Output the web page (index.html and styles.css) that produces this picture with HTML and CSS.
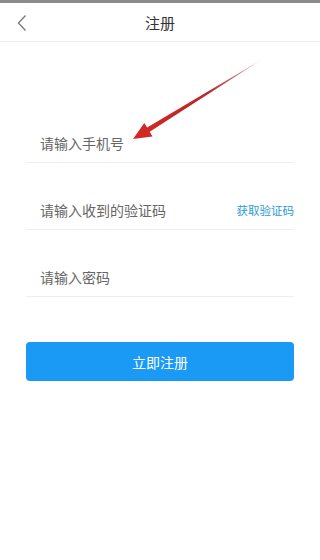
FILE: index.html
```html
<!DOCTYPE html>
<html lang="zh">
<head>
<meta charset="utf-8">
<link rel="stylesheet" href="styles.css">
</head>
<body>
<div class="statusbar"></div>
<header class="nav">
  <svg class="back" width="12" height="18" viewBox="0 0 12 18"><path d="M9.5 1.5 L2.5 9 L9.5 16.5" fill="none" stroke="#777" stroke-width="1.3"/></svg>
  <h1 class="title">注册</h1>
</header>
<form class="form">
  <div class="row"><span class="ph">请输入手机号</span></div>
  <div class="row"><span class="ph">请输入收到的验证码</span><span class="code">获取验证码</span></div>
  <div class="row"><span class="ph">请输入密码</span></div>
  <div class="btn">立即注册</div>
</form>
<svg class="arrow" width="320" height="560" viewBox="0 0 320 560">
  <defs>
    <linearGradient id="g" x1="133" y1="139" x2="261" y2="60" gradientUnits="userSpaceOnUse">
      <stop offset="0" stop-color="#d42a22"/>
      <stop offset="0.6" stop-color="#b8262a"/>
      <stop offset="1" stop-color="#e9b0b0"/>
    </linearGradient>
  </defs>
  <polygon points="133,139 144.3,122.9 147.1,127.6 261,60 149.7,131.8 152.5,136.5" fill="url(#g)"/>
</svg>
</body>
</html>
```
FILE: styles.css
```css
html, body { margin: 0; padding: 0; background: #fff; }
body {
  width: 320px; height: 560px; position: relative; overflow: hidden;
  font-family: "Noto Sans CJK SC", "Noto Sans", sans-serif;
}
.statusbar { height: 3px; background: #8c8c8c; }
.nav {
  height: 38px; display: flex; align-items: center; justify-content: center;
  position: relative; border-bottom: 1px solid #efefef;
}
.back { position: absolute; left: 16px; top: 11px; }
.title { margin: 0; font-size: 15px; font-weight: normal; color: #333; }
.form { margin-top: 54px; padding: 0 26px; display: flex; flex-direction: column; }
.row {
  height: 56px; padding: 0 0 10px 14px; border-bottom: 1px solid #eeeeee;
  display: flex; align-items: flex-end; justify-content: space-between;
}
.ph { font-size: 14px; color: #666; line-height: 18px; }
.code { font-size: 11.5px; color: #2a9bd8; line-height: 18px; }
.btn {
  margin-top: 45px; height: 39px; border-radius: 4px; background: #1a9af4;
  color: #fff; font-size: 14px; display: flex; align-items: center; justify-content: center;
}
.arrow { position: absolute; left: 0; top: 0; pointer-events: none; }
```
